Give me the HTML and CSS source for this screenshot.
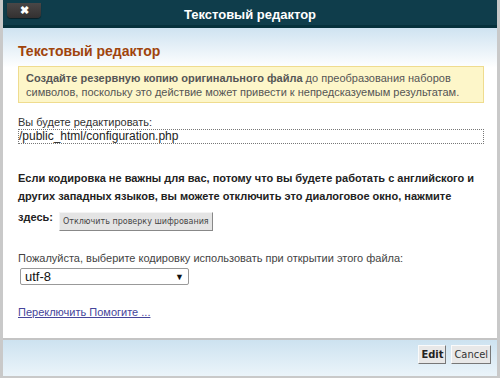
FILE: index.html
```html
<!DOCTYPE html>
<html lang="ru">

<head>
    <meta charset="UTF-8">
    <meta name="viewport" content="width=device-width, initial-scale=1.0">
    <title>Текстовый редактор</title>
    <link rel="stylesheet" href="styles.css">
</head>

<body>
    <div class="dialog">
        <header class="titlebar">
            <div class="close-wrap">
                <button type="button" class="close-btn">&#10006;</button>
            </div>
            <h1>Текстовый редактор</h1>
            <div></div>
        </header>
        <main class="content">
            <h2>Текстовый редактор</h2>
            <div class="warning">
                <strong>Создайте резервную копию оригинального файла</strong> до преобразования наборов
                символов, поскольку это действие может привести к непредсказуемым результатам.
            </div>
            <div class="file-group">
                <label for="file-path">Вы будете редактировать:</label>
                <div class="file-path" id="file-path">/public_html/configuration.php</div>
            </div>
            <p class="notice">Если кодировка не важны для вас, потому что вы будете работать с английского и
                других западных языков, вы можете отключить это диалоговое окно, нажмите</p>
            <div class="here-row">
                <span class="here">здесь:</span>
                <button type="button" class="small-btn">Отключить проверку шифрования</button>
            </div>
            <div class="encoding-group">
                <label for="encoding">Пожалуйста, выберите кодировку использовать при открытии этого файла:</label>
                <div class="select" id="encoding">
                    <span>utf-8</span>
                    <span class="arrow">&#9660;</span>
                </div>
            </div>
            <a href="#" class="help-link">Переключить Помогите ...</a>
        </main>
        <footer class="actions">
            <button type="button" class="action-btn primary">Edit</button>
            <button type="button" class="action-btn">Cancel</button>
        </footer>
    </div>
</body>

</html>
```
FILE: styles.css
```css
body {
    margin: 0;
    padding: 0;
    font-family: "Liberation Sans", Arial, sans-serif;
    font-size: 11px;
    color: #333;
    background: #fff;
}

.dialog {
    width: 500px;
    height: 378px;
    box-sizing: border-box;
    border-left: 3px solid #c9c9c9;
    border-right: 3px solid #c9c9c9;
    border-bottom: 2px solid #c9c9c9;
    display: flex;
    flex-direction: column;
    overflow: hidden;
}

.titlebar {
    height: 28px;
    flex-shrink: 0;
    margin: 0 -3px;
    box-sizing: border-box;
    background: #0f3d4b;
    border-bottom: 3px solid #06313c;
    display: grid;
    grid-template-columns: 1fr auto 1fr;
    align-items: start;
}

.titlebar h1 {
    margin: 0;
    padding-top: 7px;
    color: #fff;
    font-size: 13px;
    line-height: 16px;
    font-weight: bold;
    text-align: center;
}

.close-wrap {
    padding: 3px 0 0 7px;
}

.close-btn {
    width: 34px;
    height: 15px;
    padding: 0;
    border: none;
    border-radius: 0 0 4px 4px;
    background: linear-gradient(#4a4747, #333030);
    box-shadow: 0 1px 1px rgba(0, 0, 0, 0.5);
    color: #fff;
    font-size: 11px;
    line-height: 15px;
    font-weight: bold;
}

.content {
    flex: 1;
    padding: 14px 13px 0 15px;
    background: linear-gradient(#cfe3f1, #ffffff 40px);
}

.content h2 {
    margin: 0 0 6px;
    color: #a0440c;
    font-size: 14px;
    line-height: 18px;
    font-weight: bold;
}

.warning {
    background: #fdf6c9;
    border: 1px solid #efdc8f;
    padding: 4px 7px 3px;
    line-height: 14px;
    color: #555;
}

.warning strong {
    color: #555;
}

.file-group {
    margin-top: 12px;
}

.file-group label {
    display: block;
    line-height: 14px;
}

.file-path {
    border: 1px dotted #777;
    height: 13px;
    line-height: 13px;
    color: #222;
    font-size: 12px;
}

.notice {
    margin: 25px 0 0;
    font-size: 11px;
    font-weight: bold;
    line-height: 18px;
    color: #222;
}

.here-row {
    display: flex;
    align-items: flex-start;
    gap: 6px;
    margin-top: 3px;
}

.here {
    font-size: 11px;
    font-weight: bold;
    color: #222;
    line-height: 18px;
}

.small-btn {
    margin-top: 4px;
    height: 19px;
    padding: 0 3px;
    font-family: "DejaVu Sans", Verdana, sans-serif;
    font-size: 8px;
    color: #444;
    background: #e4e4e4;
    border: 1px solid #f4f4f4;
    border-right-color: #888;
    border-bottom-color: #888;
}

.encoding-group {
    margin-top: 20px;
}

.encoding-group label {
    display: block;
    line-height: 14px;
    color: #444;
}

.select {
    margin: 3px 0 0 2px;
    width: 169px;
    height: 17px;
    box-sizing: border-box;
    border: 1px solid #999;
    border-radius: 2px;
    padding: 0 4px 0 4px;
    display: flex;
    justify-content: space-between;
    align-items: center;
    font-size: 13px;
    color: #111;
}

.select .arrow {
    font-size: 9px;
}

.help-link {
    display: inline-block;
    margin-top: 20px;
    color: #45459a;
    line-height: 14px;
}

.actions {
    height: 31px;
    flex-shrink: 0;
    border-top: 2px solid #c4c4c4;
    background: linear-gradient(#cde2f0, #ebf4fa);
    display: flex;
    justify-content: flex-end;
    align-items: flex-start;
    gap: 5px;
    padding: 5px 6px 0 0;
}

.action-btn {
    height: 19px;
    padding: 0 2px;
    font-family: "DejaVu Sans Condensed", "DejaVu Sans", Tahoma, sans-serif;
    font-size: 11px;
    color: #333;
    background: #e8e8e8;
    border: 1px solid #fafafa;
    border-right-color: #777;
    border-bottom-color: #777;
}

.action-btn.primary {
    font-weight: bold;
    color: #222;
}
```
